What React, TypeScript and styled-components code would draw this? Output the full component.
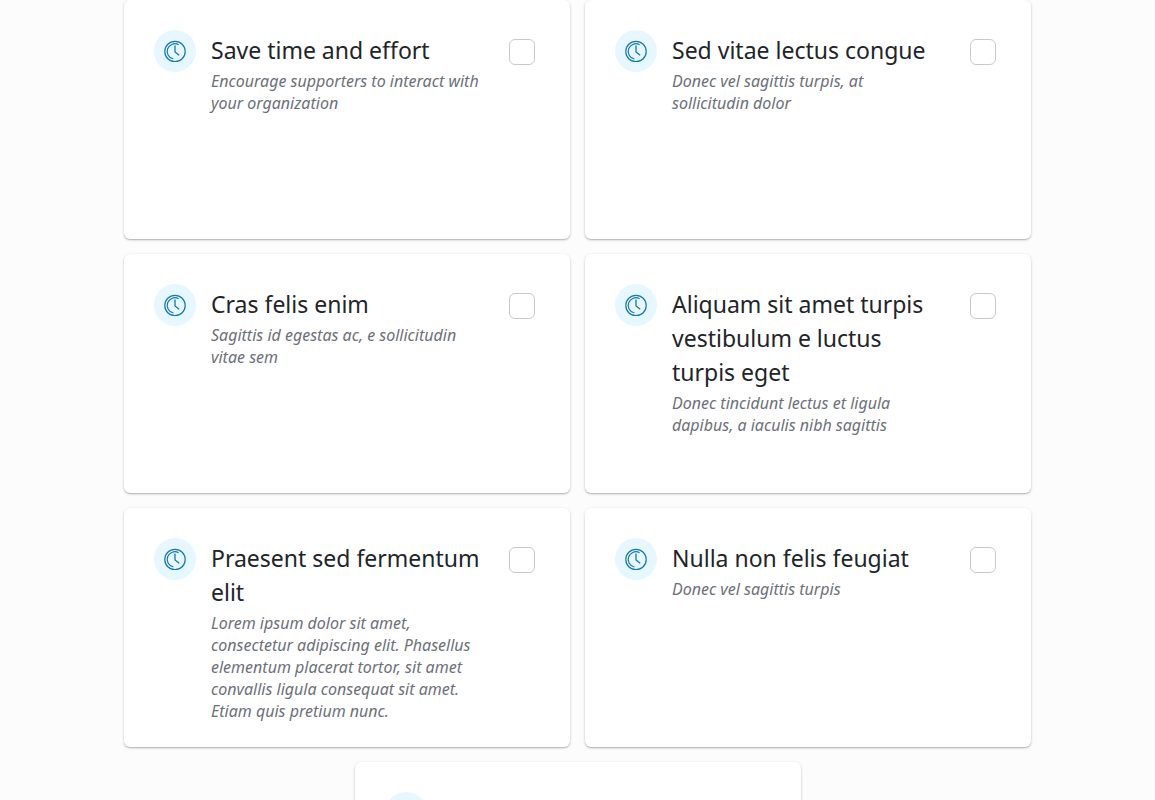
import React, { useId } from "react";
import styled, { createGlobalStyle } from "styled-components";

const GlobalStyle = createGlobalStyle`
  *, *::before, *::after { box-sizing: border-box; }
  body {
    margin: 0;
    background: #fcfcfc;
    color: #212529;
    font-family: "Noto Sans", "Open Sans", sans-serif;
  }
`;

const CardGrid = styled.main`
  display: flex;
  flex-wrap: wrap;
  justify-content: center;
  gap: 15px;
  max-width: 907px;
  margin: 0 auto;
`;

const Card = styled.label`
  display: flex;
  align-items: flex-start;
  flex: 0 1 446px;
  min-height: 239px;
  padding: 30px 35px 24px 30px;
  border-radius: 6px;
  background: #fff;
  box-shadow: 0 1px 3px rgba(0, 0, 0, 0.2), 0 1px 1px rgba(0, 0, 0, 0.14);
  cursor: pointer;
`;

const IconBadge = styled.span`
  display: flex;
  flex: none;
  align-items: center;
  justify-content: center;
  width: 42px;
  height: 42px;
  margin-right: 15px;
  border-radius: 50%;
  background: #e6f7ff;
`;

const CardText = styled.span`
  flex: 1;
  min-width: 0;
  padding-top: 3px;
`;

const Title = styled.span`
  display: block;
  font-size: 23px;
  line-height: 34px;
`;

const Description = styled.span`
  display: block;
  padding-top: 3px;
  color: #6c7078;
  font-size: 16px;
  font-style: italic;
  line-height: 22px;
`;

const Checkbox = styled.input`
  appearance: none;
  flex: none;
  width: 26px;
  height: 26px;
  margin: 9px 0 0 28px;
  border: 1px solid #c8c9cc;
  border-radius: 6px;
  background: #fff;

  &:checked {
    border-color: #0a7aa8;
    background: #0a7aa8;
  }
`;

const ClockIcon = () => (
  <svg width="22" height="22" viewBox="0 0 22 22" fill="none" stroke="#147aa8" aria-hidden="true">
    <circle cx="11" cy="11.5" r="10.2" strokeWidth="1.2" />
    <path d="M14.6 4.7A7.7 7.7 0 1 0 9.4 19" strokeWidth="1.2" />
    <path d="M11 5.6V12L15.2 15.3" strokeWidth="1.3" />
  </svg>
);

interface Option {
  title?: string[];
  description?: string[];
}

const options: Option[] = [
  {
    title: ["Save time and effort"],
    description: ["Encourage supporters to interact with", "your organization"],
  },
  {
    title: ["Sed vitae lectus congue"],
    description: ["Donec vel sagittis turpis, at", "sollicitudin dolor"],
  },
  {
    title: ["Cras felis enim"],
    description: ["Sagittis id egestas ac, e sollicitudin", "vitae sem"],
  },
  {
    title: ["Aliquam sit amet turpis", "vestibulum e luctus", "turpis eget"],
    description: ["Donec tincidunt lectus et ligula", "dapibus, a iaculis nibh sagittis"],
  },
  {
    title: ["Praesent sed fermentum", "elit"],
    description: [
      "Lorem ipsum dolor sit amet,",
      "consectetur adipiscing elit. Phasellus",
      "elementum placerat tortor, sit amet",
      "convallis ligula consequat sit amet.",
      "Etiam quis pretium nunc.",
    ],
  },
  {
    title: ["Nulla non felis feugiat"],
    description: ["Donec vel sagittis turpis"],
  },
  {},
];

const Lines = ({ lines }: { lines: string[] }) => (
  <>
    {lines.map((line, index) => (
      <React.Fragment key={line}>
        {index > 0 && <br />}
        {line}
      </React.Fragment>
    ))}
  </>
);

const OptionCard = ({ title, description }: Option) => {
  const id = useId();
  return (
    <Card htmlFor={id}>
      <IconBadge>
        <ClockIcon />
      </IconBadge>
      <CardText>
        {title && <Title><Lines lines={title} /></Title>}
        {description && <Description><Lines lines={description} /></Description>}
      </CardText>
      <Checkbox id={id} type="checkbox" />
    </Card>
  );
};

export default function App() {
  return (
    <>
      <GlobalStyle />
      <CardGrid>
        {options.map((option, index) => (
          <OptionCard key={index} {...option} />
        ))}
      </CardGrid>
    </>
  );
}
